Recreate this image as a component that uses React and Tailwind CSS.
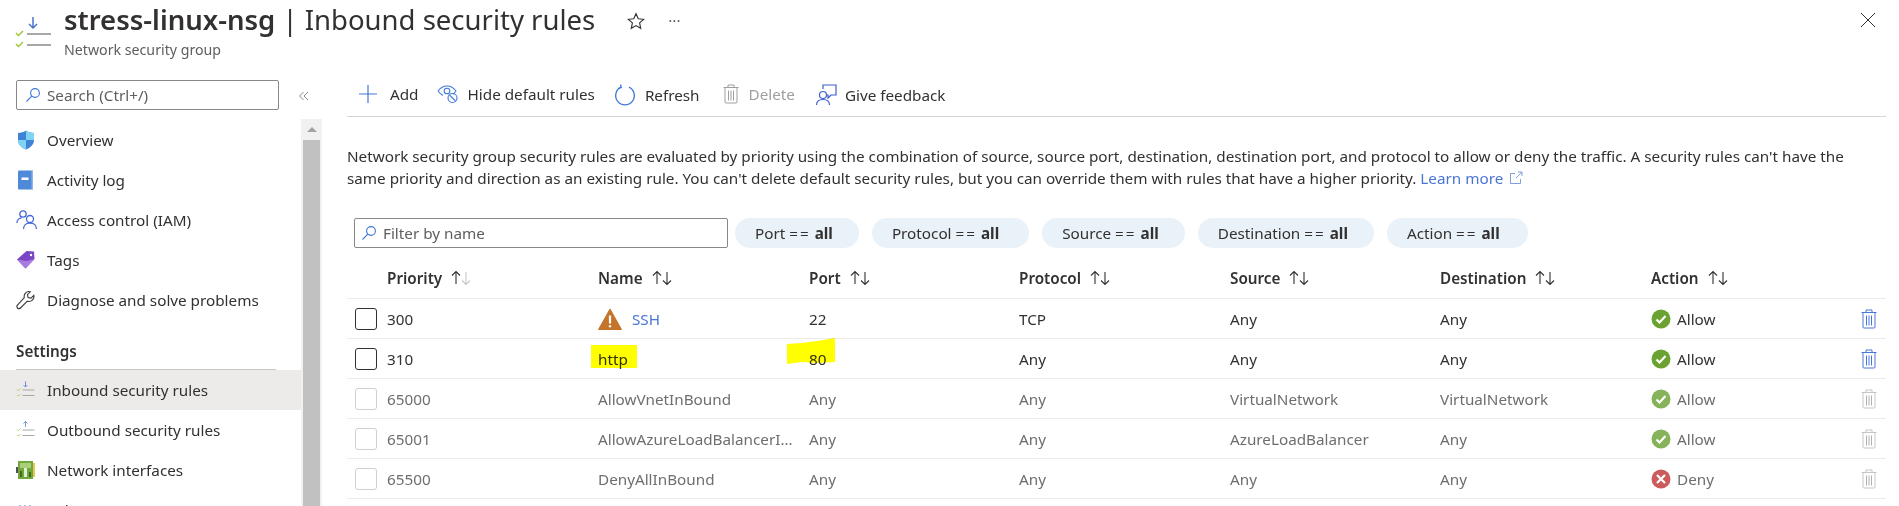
import React from "react";

const ROWS = [
  { priority: "300", name: "SSH", port: "22", protocol: "TCP", source: "Any", destination: "Any", action: "Allow", warn: true, active: true },
  { priority: "310", name: "http", port: "80", protocol: "Any", source: "Any", destination: "Any", action: "Allow", marked: true, active: true },
  { priority: "65000", name: "AllowVnetInBound", port: "Any", protocol: "Any", source: "VirtualNetwork", destination: "VirtualNetwork", action: "Allow" },
  { priority: "65001", name: "AllowAzureLoadBalancerInBound", port: "Any", protocol: "Any", source: "AzureLoadBalancer", destination: "Any", action: "Allow" },
  { priority: "65500", name: "DenyAllInBound", port: "Any", protocol: "Any", source: "Any", destination: "Any", action: "Deny" },
];

const COLUMNS = "grid-cols-[40px_211px_211px_210px_211px_210px_211px_150px_1fr]";

function RulesIcon({ up = false, className = "" }) {
  return (
    <svg viewBox="0 0 40 40" className={className} fill="none">
      {up ? (
        <path d="M19 14V3M15 7l4-4 4 4" stroke="#4a76c9" strokeWidth="1.5" />
      ) : (
        <path d="M19 3v11M15 10l4 4 4-4" stroke="#4a76c9" strokeWidth="1.5" />
      )}
      <path d="M13 20h24M13 31h24" stroke="#a8a8a8" strokeWidth="2" />
      <path d="M2 19l2.5 2.5L9 17M2 30l2.5 2.5L9 28" stroke="#a4c739" strokeWidth="1.5" />
    </svg>
  );
}

function SearchIcon() {
  return (
    <svg viewBox="0 0 16 16" className="h-4 w-4 shrink-0" fill="none" stroke="#3f78d8" strokeWidth="1.1">
      <circle cx="10" cy="6" r="4.4" />
      <path d="M6.8 9.2L1.5 14.5" />
    </svg>
  );
}

function NavIcon({ type }) {
  if (type === "shield") {
    return (
      <svg viewBox="0 0 20 20" className="h-5 w-5">
        <path d="M10 0.5c2.5 1.8 5 2.4 8 2.4v7c0 4.6-3.6 7.6-8 9.6-4.4-2-8-5-8-9.6v-7c3 0 5.500-.6 8-2.400z" fill="#3f83d6" />
        <path d="M10 0.5c2.5 1.8 5 2.4 8 2.4v7h-8zM10 9.900H2c0 4.600 3.600 7.600 8 9.600z" fill="#7fd3f3" />
      </svg>
    );
  }
  if (type === "log") {
    return (
      <svg viewBox="0 0 20 20" className="h-5 w-5">
        <rect x="2" y="0.500" width="15" height="19" rx="1" fill="#4f8ad8" />
        <rect x="15.500" y="0.500" width="1.500" height="19" fill="#8fb7e6" />
        <rect x="5.500" y="7.500" width="7" height="2.500" fill="#fff" />
      </svg>
    );
  }
  if (type === "iam") {
    return (
      <svg viewBox="0 0 22 22" className="h-[22px] w-[22px]" fill="none" stroke="#4668d8" strokeWidth="1.300">
        <circle cx="7" cy="5" r="3.200" />
        <path d="M1 14c0-3 2-5 4.500-5" />
        <circle cx="14" cy="10" r="3.500" />
        <path d="M7.500 20c0-3.500 2.500-6 6.500-6s6.500 2.500 6.500 6" />
      </svg>
    );
  }
  if (type === "tag") {
    return (
      <svg viewBox="0 0 20 20" className="h-5 w-5">
        <path d="M1 9.500L10.500 1l7.500.500.500 7.500L9.500 18.500z" fill="#7b46c6" />
        <path d="M1 9.500l8.500 9 9-9.500-8 2z" fill="#a77be0" />
        <circle cx="15" cy="5" r="1.200" fill="#fff" />
      </svg>
    );
  }
  if (type === "wrench") {
    return (
      <svg viewBox="0 0 20 20" className="h-5 w-5" fill="none" stroke="#3b3a39" strokeWidth="1.100">
        <path d="M12.500 1.500a5 5 0 0 1 1.800.300L11.500 4.600l.5 3 3 .5 2.800-2.800a5 5 0 0 1-6.500 5.900L4.500 18a2.100 2.100 0 0 1-3-3l6.800-7.300a5 5 0 0 1 4.200-6.200z" />
      </svg>
    );
  }
  if (type === "inbound" || type === "outbound") {
    return <RulesIcon up={type === "outbound"} className="h-5 w-5" />;
  }
  if (type === "nic") {
    return (
      <svg viewBox="0 0 20 20" className="h-5 w-5">
        <rect x="0" y="7" width="2" height="6" fill="#505050" />
        <rect x="2" y="1" width="15" height="18" fill="#70a83c" />
        <rect x="17" y="3" width="2" height="14" fill="#e4c84f" />
        <rect x="4" y="3" width="11" height="5" fill="#a9cf7c" />
        <rect x="8" y="8" width="3" height="9" fill="#e3efd5" />
        <rect x="4" y="11" width="2" height="6" fill="#3f6b1f" />
        <rect x="13" y="12" width="2" height="5" fill="#3f6b1f" />
      </svg>
    );
  }
  return (
    <svg viewBox="0 0 20 20" className="h-5 w-5">
      <path d="M3 5h2v2H3zM8 5h2v2H8zM13 5h2v2h-2z" fill="#9cc3ea" />
    </svg>
  );
}

function NavItem({ icon, label, active }) {
  return (
    <div className={`flex h-10 shrink-0 items-center pl-4 pr-2 text-[#323130] ${active ? "bg-[#edebe9]" : ""}`}>
      <span className="flex w-[31px] shrink-0 items-center">
        <NavIcon type={icon} />
      </span>
      <span>{label}</span>
    </div>
  );
}

function Scrollbar() {
  return (
    <div className="flex w-[21px] shrink-0 flex-col items-center bg-[#f1f1f1]">
      <div className="flex h-[21px] shrink-0 items-center justify-center">
        <div className="h-0 w-0 border-x-[5px] border-b-[5px] border-x-transparent border-b-[#a3a3a3]" />
      </div>
      <div className="w-[17px] flex-1 bg-[#c1c1c1]" />
    </div>
  );
}

function Sidebar() {
  return (
    <aside className="flex w-[347px] shrink-0 flex-col">
      <div className="flex h-[49px] shrink-0 items-start">
        <div className="ml-4 mt-2.5 flex h-[30px] w-[263px] items-center gap-[6px] rounded-[2px] border border-[#8a8886] pl-2 text-[#605e5c]">
          <SearchIcon />
          <span>Search (Ctrl+/)</span>
        </div>
        <svg viewBox="0 0 12 12" className="ml-[19px] mt-[20px] h-3 w-3" fill="none" stroke="#8a8886" strokeWidth="1">
          <path d="M5.500 2L1.500 6l4 4M10 2L6 6l4 4" />
        </svg>
      </div>
      <div className="flex min-h-0 w-[322px] flex-1">
        <div className="flex w-[301px] shrink-0 flex-col">
          <div className="h-px shrink-0" />
          <NavItem icon="shield" label="Overview" />
          <NavItem icon="log" label="Activity log" />
          <NavItem icon="iam" label="Access control (IAM)" />
          <NavItem icon="tag" label="Tags" />
          <NavItem icon="wrench" label="Diagnose and solve problems" />
          <div className="mx-4 flex h-[50px] w-[260px] shrink-0 items-end border-b border-[#c8c6c4] pb-[8px] font-semibold leading-5 text-[#323130]">
            Settings
          </div>
          <NavItem icon="inbound" label="Inbound security rules" active />
          <NavItem icon="outbound" label="Outbound security rules" />
          <NavItem icon="nic" label="Network interfaces" />
          <NavItem icon="subnet" label="Subnets" />
        </div>
        <Scrollbar />
      </div>
    </aside>
  );
}

function ToolButton({ icon, label, disabled, className = "" }) {
  return (
    <div className={`flex items-center ${disabled ? "text-[#a19f9d]" : "text-[#323130]"} ${className}`}>
      {icon}
      <span>{label}</span>
    </div>
  );
}

function Toolbar() {
  return (
    <div className="flex h-[47px] shrink-0 items-start border-b border-[#d6d6d6] pl-[11px] pt-[14px]">
      <ToolButton
        label="Add"
        className="gap-3"
        icon={
          <svg viewBox="0 0 20 20" className="h-5 w-5" fill="none" stroke="#3f78d8" strokeWidth="1.200">
            <path d="M10 1v18M1 10h18" />
          </svg>
        }
      />
      <ToolButton
        label="Hide default rules"
        className="ml-[18px] gap-[9px]"
        icon={
          <svg viewBox="0 0 22 20" className="h-5 w-[22px]" fill="none" stroke="#3f78d8" strokeWidth="1.100">
            <path d="M1 7c2.500-3.500 5.500-5 9-5s6.500 1.500 9 5c-1 1.500-2 2.500-3 3.300" />
            <path d="M1 7c1.500 2 3 3.500 5 4.500" />
            <circle cx="10" cy="7" r="2.800" />
            <circle cx="15.500" cy="14" r="4.500" />
            <path d="M12.500 11l6 6" />
          </svg>
        }
      />
      <ToolButton
        label="Refresh"
        className="ml-[19px] gap-[9px]"
        icon={
          <svg viewBox="0 0 22 22" className="h-[22px] w-[22px]" fill="none" stroke="#3f78d8" strokeWidth="1.300">
            <path d="M15 3.200A9.300 9.300 0 1 1 7 3.200" />
            <path d="M6.500 0.500L7.200 3.500 4 4.500" />
          </svg>
        }
      />
      <ToolButton
        label="Delete"
        disabled
        className="ml-[23px] gap-[10px]"
        icon={<TrashIcon color="#a19f9d" bars="#a19f9d" />}
      />
      <ToolButton
        label="Give feedback"
        className="ml-5 gap-2"
        icon={
          <svg viewBox="0 0 22 22" className="h-[22px] w-[22px]" fill="none" stroke="#3f5fd0" strokeWidth="1.200">
            <circle cx="8" cy="11" r="3.500" />
            <path d="M1.500 21c0-3.500 2.500-5.500 6.500-5.500s6.500 2 6.500 5.500" />
            <path d="M8 5V1h13v10h-5l-3 3v-3h-1" />
          </svg>
        }
      />
    </div>
  );
}

function TrashIcon({ color, bars }) {
  return (
    <svg viewBox="0 0 16 20" className="h-5 w-4 shrink-0" fill="none" stroke={color} strokeWidth="1">
      <path d="M0.500 3.500h15M5 3.500V1h6v2.500" />
      <rect x="2" y="3.500" width="12" height="15.500" rx="1" />
      <path d="M5.500 6.500v10M8 6.500v10M10.500 6.500v10" stroke={bars} />
    </svg>
  );
}

function SortArrows({ dim }) {
  return (
    <svg viewBox="0 0 22 16" className="ml-[8px] h-4 w-[22px]" fill="none" strokeWidth="1.100">
      <path d="M6 14V1.500M2 5.500l4-4 4 4" stroke="#323130" />
      <path d="M16 2v12.500M12 10.500l4 4 4-4" stroke={dim ? "#c8c6c4" : "#323130"} />
    </svg>
  );
}

function FilterPill({ label, className = "" }) {
  return (
    <div className={`flex h-[30px] items-center rounded-full bg-[#e9f1f9] pl-5 text-[#323130] ${className}`}>
      <span className="whitespace-pre">{label} </span>
      <span className="tracking-[2px]">==</span>
      <span className="whitespace-pre"> </span>
      <span className="font-bold">all</span>
    </div>
  );
}

function ActionIcon({ deny, active }) {
  const fill = deny ? "#cc5c5c" : active ? "#6ba232" : "#86b25a";
  return (
    <svg viewBox="0 0 20 20" className="h-5 w-5 shrink-0">
      <circle cx="10" cy="10" r="9.500" fill={fill} />
      {deny ? (
        <path d="M6 6l8 8M14 6l-8 8" stroke="#fff" strokeWidth="2.200" />
      ) : (
        <path d="M5.500 10.500l3 3 6-6.500" stroke="#fff" strokeWidth="2.200" fill="none" />
      )}
    </svg>
  );
}

function RuleRow({ row }) {
  const text = row.active ? "text-[#323130]" : "text-[#6e6e6e]";
  return (
    <div className={`grid h-10 ${COLUMNS} items-center border-b border-[#edebe9] ${text}`}>
      <div className={`ml-2 h-[22px] w-[22px] rounded-[3px] border ${row.active ? "border-[#323130]" : "border-[#d2d0ce]"}`} />
      <div>{row.priority}</div>
      <div className="relative flex min-w-0 items-center">
        {row.warn && (
          <svg viewBox="0 0 24 22" className="mr-[10px] h-[22px] w-6 shrink-0">
            <path d="M12 1L23.500 21.500H0.500z" fill="#c4752b" stroke="#c4752b" strokeLinejoin="round" />
            <path d="M12 7.500v8" stroke="#fff" strokeWidth="2.200" />
            <circle cx="12" cy="18.300" r="1.200" fill="#fff" />
          </svg>
        )}
        <span className={`truncate pr-[12px] ${row.warn ? "text-[#4a76d6]" : ""}`}>{row.name}</span>
        {row.marked && <div className="absolute left-[-7px] top-[-4px] h-[23px] w-[46px] bg-[#ffff00] mix-blend-multiply" />}
      </div>
      <div className="relative">
        {row.port}
        {row.marked && (
          <svg viewBox="0 0 48 26" className="absolute left-[-22px] top-[-11px] h-[26px] w-12 mix-blend-multiply">
            <path d="M0 6L15 5 30 3 48 0V24L30 25 15 24 0 26z" fill="#ffff00" />
          </svg>
        )}
      </div>
      <div>{row.protocol}</div>
      <div>{row.source}</div>
      <div>{row.destination}</div>
      <div className="flex items-center gap-[6px]">
        <ActionIcon deny={row.action === "Deny"} active={row.active} />
        {row.action}
      </div>
      <div className="flex justify-end pr-[9px]">
        <TrashIcon color={row.active ? "#4a76d6" : "#c8c6c4"} bars={row.active ? "#4a76d6" : "#b0b0b0"} />
      </div>
    </div>
  );
}

export default function App() {
  return (
    <div className="flex h-[506px] w-[1899px] flex-col overflow-hidden bg-white font-['Noto_Sans',sans-serif] text-[15.25px] leading-5">
      <header className="flex h-[70px] shrink-0 items-start pl-[14px] pt-[2px]">
        <RulesIcon className="mt-[12px] h-10 w-10" />
        <div className="ml-[10px]">
          <div className="flex items-center">
            <h1 className="whitespace-pre text-[27.5px] leading-[36px] text-[#323130]">
              <span className="font-semibold">stress-linux-nsg</span> | Inbound security rules
            </h1>
            <svg viewBox="0 0 16 16" className="ml-[32px] mt-[2px] h-[18px] w-[18px]" fill="none" stroke="#323130" strokeWidth="1">
              <path d="M8 1.500l2 4.500 4.800.5-3.600 3.200 1 4.800L8 12.100l-4.200 2.400 1-4.800L1.200 6.500 6 6z" />
            </svg>
            <span className="ml-[23px] text-[#605e5c]">···</span>
          </div>
          <p className="mt-[3px] text-[14.2px] leading-[18px] text-[#605e5c]">Network security group</p>
        </div>
        <svg viewBox="0 0 16 16" className="ml-auto mr-[23px] mt-[10px] h-4 w-4" fill="none" stroke="#323130" strokeWidth="1">
          <path d="M1 1l14 14M15 1L1 15" />
        </svg>
      </header>
      <div className="flex min-h-0 flex-1">
        <Sidebar />
        <main className="min-w-0 flex-1 pr-[13px]">
          <Toolbar />
          <div className="mt-[28px] text-[#323130]" style={{ lineHeight: "22px" }}>
            <p>
              Network security group security rules are evaluated by priority using the combination of source, source port, destination, destination port, and protocol to allow or deny the traffic. A security rules can't have the
              <br />
              same priority and direction as an existing rule. You can't delete default security rules, but you can override them with rules that have a higher priority.{" "}
              <span className="text-[#4a76d6]">
                Learn more
                <svg viewBox="0 0 14 14" className="ml-[6px] inline h-3.5 w-3.5 align-[-1px]" fill="none" stroke="#7f9fe0" strokeWidth="1">
                  <path d="M6 2.500H1.500v10h10V8M7 7l6-6M9 1h4v4" />
                </svg>
              </span>
            </p>
          </div>
          <div className="ml-[7px] mt-[29px] flex items-center">
            <div className="flex h-[30px] w-[374px] items-center gap-[6px] rounded-[2px] border border-[#8a8886] pl-[6px] text-[#605e5c]">
              <SearchIcon />
              <span>Filter by name</span>
            </div>
            <FilterPill label="Port" className="ml-[7px] pr-[26px]" />
            <FilterPill label="Protocol" className="ml-[13px] pr-[30px]" />
            <FilterPill label="Source" className="ml-[13px] pr-[26px]" />
            <FilterPill label="Destination" className="ml-[13px] pr-[26px]" />
            <FilterPill label="Action" className="ml-[13px] pr-[28px]" />
          </div>
          <div className={`mt-[13px] grid h-[38px] ${COLUMNS} items-center border-b border-[#edebe9] pb-[3px] font-semibold text-[#323130]`}>
            <div />
            {["Priority", "Name", "Port", "Protocol", "Source", "Destination", "Action"].map((title, i) => (
              <div key={title} className="flex items-center">
                {title}
                <SortArrows dim={i === 0} />
              </div>
            ))}
            <div />
          </div>
          {ROWS.map((row) => (
            <RuleRow key={row.priority} row={row} />
          ))}
        </main>
      </div>
    </div>
  );
}
